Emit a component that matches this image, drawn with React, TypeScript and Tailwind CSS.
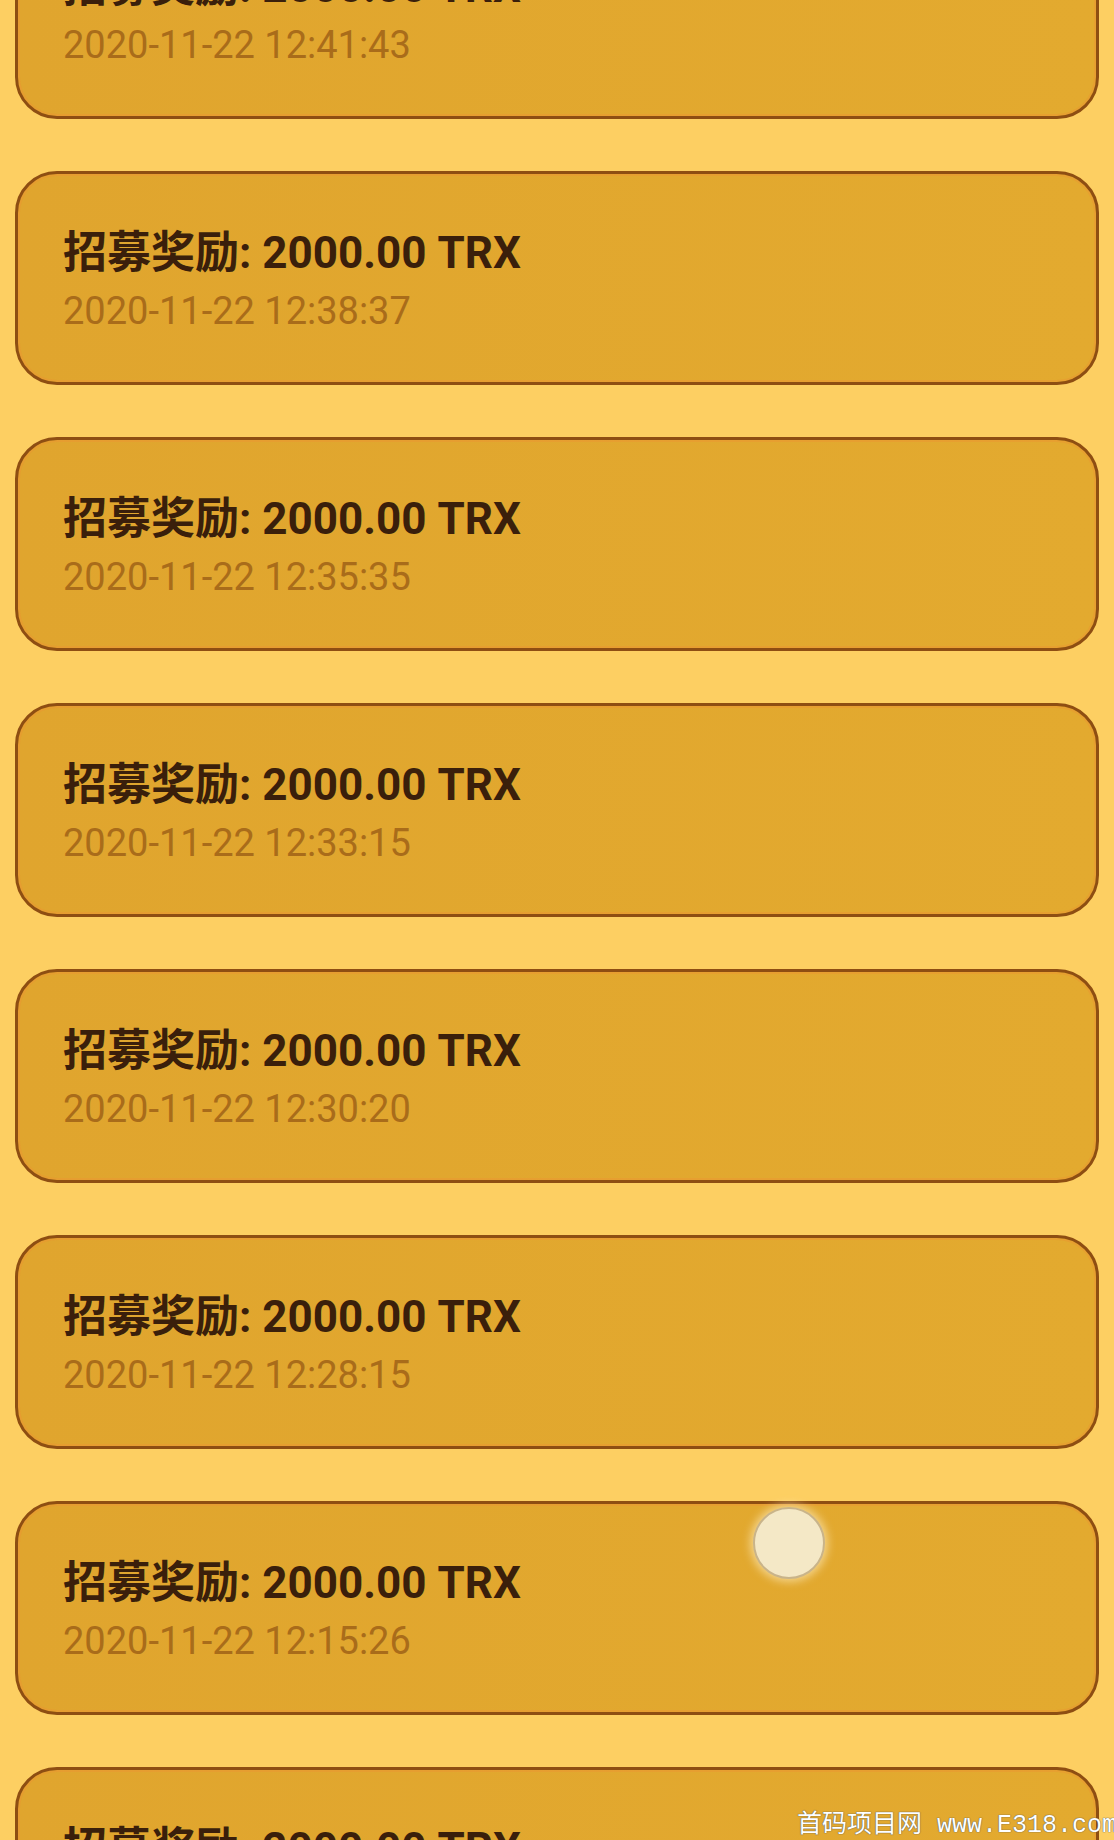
import React from 'react'

const records = [
  '2020-11-22 12:41:43',
  '2020-11-22 12:38:37',
  '2020-11-22 12:35:35',
  '2020-11-22 12:33:15',
  '2020-11-22 12:30:20',
  '2020-11-22 12:28:15',
  '2020-11-22 12:15:26',
  '2020-11-22 12:12:08',
]

function RecordCard({ time }: { time: string }) {
  return (
    <div className="h-[214px] shrink-0 rounded-[42px] border-[3px] border-[#8e4e12] bg-gradient-to-r from-[#e0a52e] to-[#e3aa2f] shadow-[inset_0_0_0_2px_rgba(236,150,50,0.5)] flex flex-col justify-center pl-[45px] pt-[4px]">
      <p
        className="text-[44px] leading-[52px] font-bold text-[#3a1f0b]"
        style={{ fontFamily: 'Roboto, "Noto Sans CJK SC", sans-serif' }}
      >
        招募奖励: 2000.00 TRX
      </p>
      <p
        className="mt-[10px] text-[38px] leading-[44px] text-[#a96c1a]"
        style={{ fontFamily: 'Roboto, "Noto Sans CJK SC", sans-serif' }}
      >
        {time}
      </p>
    </div>
  )
}

export default function App() {
  return (
    <div className="relative w-[1114px] h-[1840px] overflow-hidden bg-[#fdcf62]">
      {/* scrolled list */}
      <div className="flex flex-col gap-[52px] px-[15px] -mt-[95px]">
        {records.map((t) => (
          <RecordCard key={t} time={t} />
        ))}
      </div>

      {/* touch indicator */}
      <div className="absolute left-[753px] top-[1507px] w-[72px] h-[72px] rounded-full bg-[#f4e8c6] border-2 border-[#c9b48a] shadow-[0_0_8px_3px_rgba(255,240,200,0.6)]" />

      {/* watermark */}
      <div
        className="absolute left-[797px] bottom-[0px] whitespace-nowrap text-[25px] leading-[28px] text-white [text-shadow:0_0_1px_#555,0_0_1px_#555]"
        style={{ fontFamily: '"Liberation Mono", "Noto Sans CJK SC", monospace' }}
      >
        首码项目网 www.E318.com
      </div>
    </div>
  )
}
